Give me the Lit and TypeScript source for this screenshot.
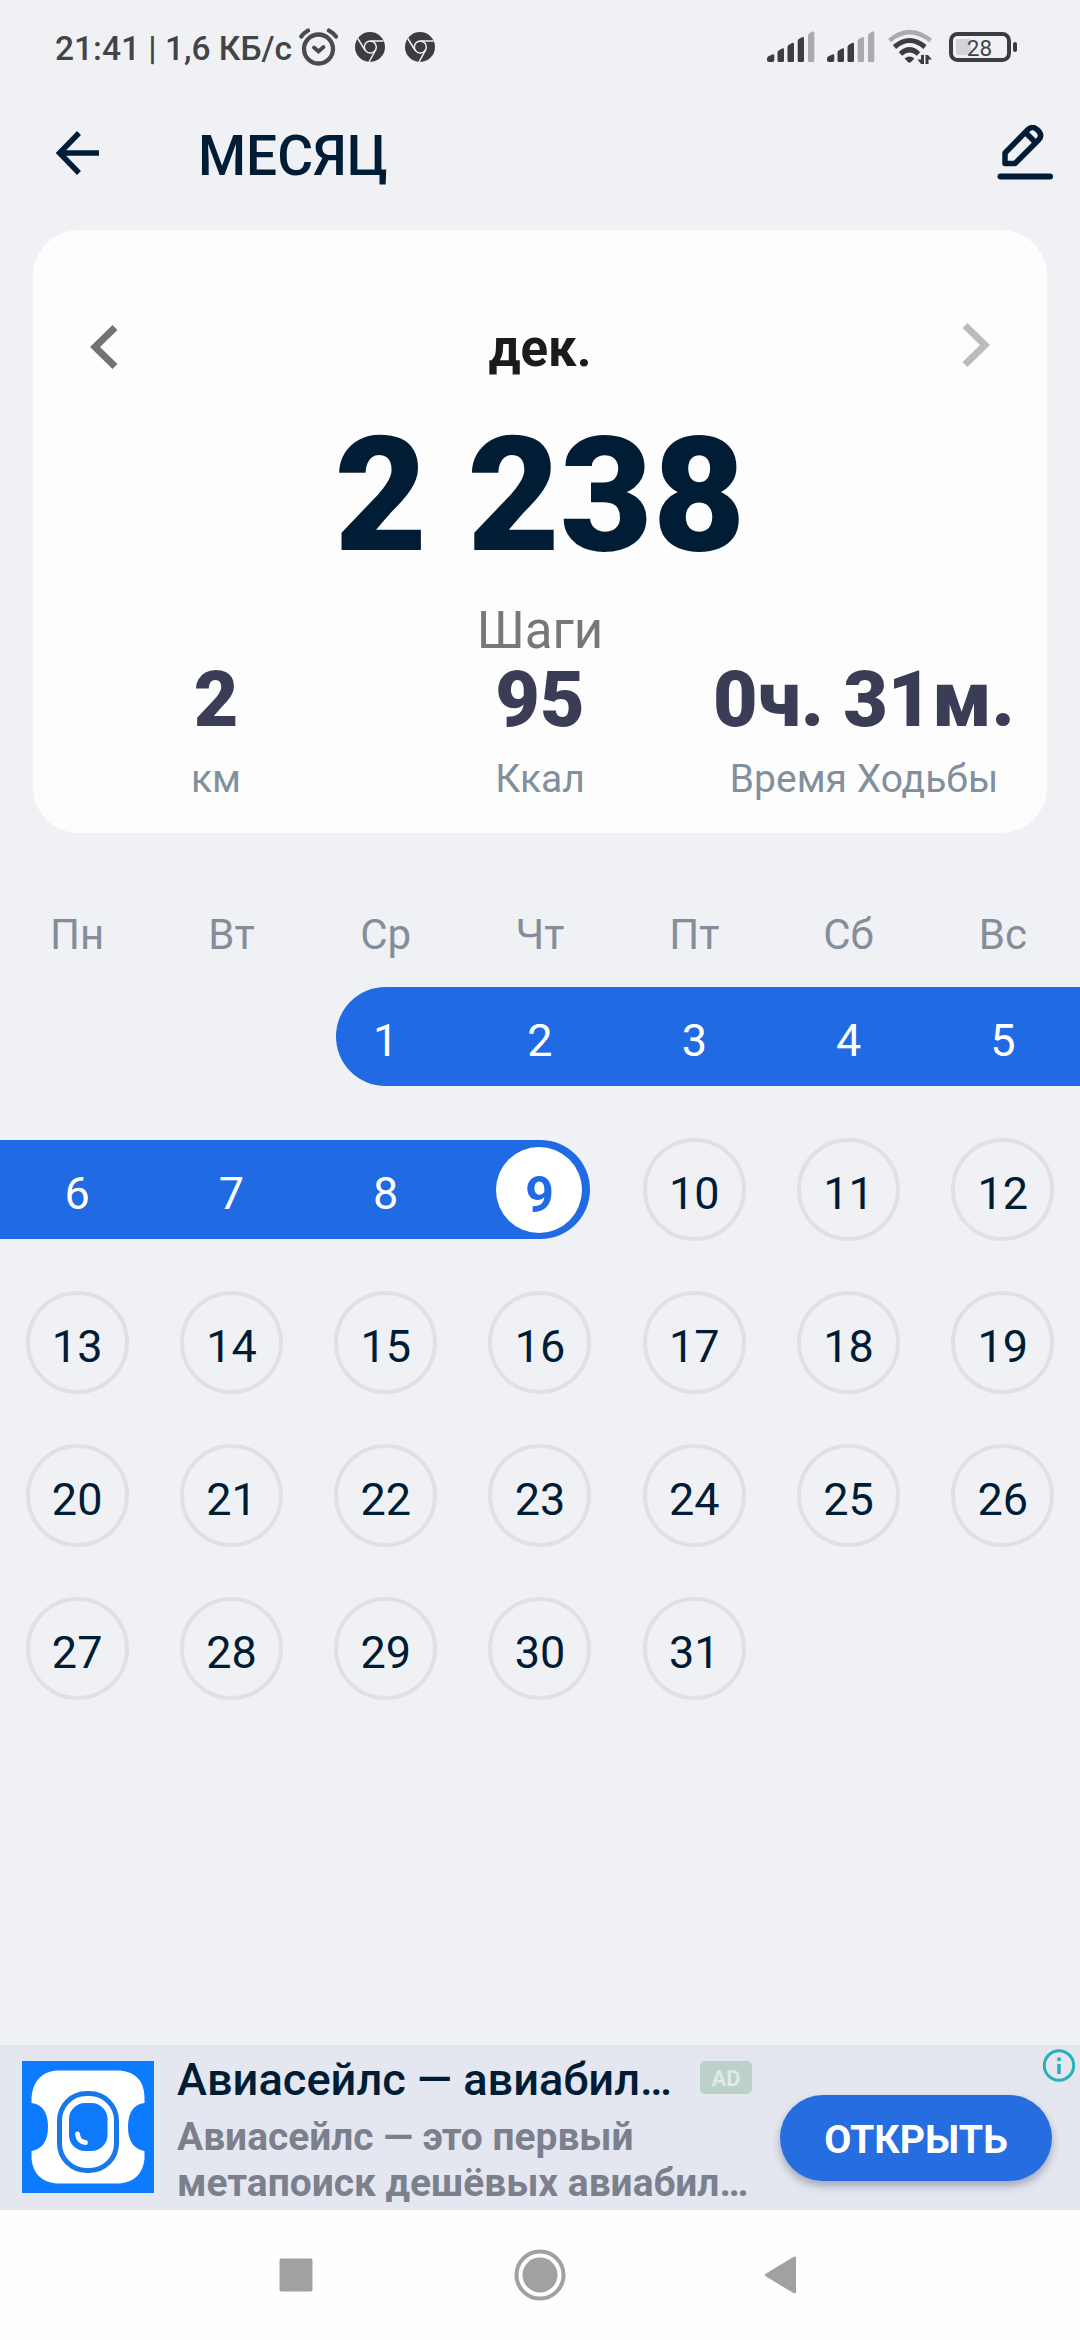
import { LitElement, html, css, svg } from "lit";
import { customElement } from "lit/decorators.js";
import { classMap } from "lit/directives/class-map.js";

const WEEKDAYS = ["Пн", "Вт", "Ср", "Чт", "Пт", "Сб", "Вс"];
const OFFSET = 2;
const DAYS = 31;
const TODAY = 9;
const STATS = [
  { value: "2", label: "км" },
  { value: "95", label: "Ккал" },
  { value: "0ч. 31м.", label: "Время Ходьбы" },
];

const signal = (level: number) => html`<svg class="signal" width="48" height="32" viewBox="0 0 48 32">
  ${[
    "M0 27.5Q0 26 1.500 25.200L5.500 23.400Q7.300 22.800 7.300 24.600V29Q7.300 31 5.300 31H2Q0 31 0 29Z",
    "M10.500 21.500Q10.500 20 12 19.200L15 17.500Q17 16.800 17 18.600V29.500Q17 31 15.500 31H12Q10.500 31 10.500 29.500Z",
    "M20.500 16Q20.500 14.500 22 13.700L25 12Q27 11.300 27 13V29.500Q27 31 25.500 31H22Q20.500 31 20.500 29.500Z",
    "M30.700 10Q30.700 8.500 32.200 7.700L35 6.200Q37 5.400 37 7.200V29.500Q37 31 35.500 31H32.200Q30.700 31 30.700 29.500Z",
    "M41 4.500Q41 3 42.500 2.200L45.300.6Q47.300 0 47.300 1.700V29.500Q47.300 31 45.800 31H42.500Q41 31 41 29.500Z",
  ].map((d, i) => svg`<path d=${d} fill=${i < level ? "#3c3d40" : "#a9abaf"} />`)}
</svg>`;

const chrome = () => html`<svg class="chrome" width="30" height="30" viewBox="0 0 30 30">
  <circle cx="15" cy="15" r="15" fill="#3c3d40" />
  <g fill="none" stroke="#f0f1f5" stroke-width="1.500">
    <circle cx="15.300" cy="15" r="6" />
    <path d="M15.300 9H28.500M9.900 18L2.800 6.500M20.600 18L14 30" />
  </g>
</svg>`;

@customElement("app-root")
export class AppRoot extends LitElement {
  static styles = css`
    :host { display: block; }
    * { box-sizing: border-box; }
    svg { display: block; flex: none; }
    .screen {
      width: 1080px; height: 2340px; display: flex; flex-direction: column;
      background: #f0f1f5; font-family: Roboto, "Noto Sans", sans-serif; color: #011c35; overflow: hidden;
    }
    .status { height: 94px; display: flex; align-items: center; padding: 0 63px 0 55px; color: #434447; flex: none; }
    .clock { font-size: 33.500px; line-height: 40px; font-weight: 500; white-space: nowrap; width: 243px; padding-top: 3px; }
    .chrome { margin-left: 17px; }
    .chrome + .chrome { margin-left: 20px; }
    .spacer { flex: 1; }
    .signal { margin-right: 12px; }
    .battery { position: relative; width: 68px; height: 30px; margin-left: 15px; }
    .level { position: absolute; left: 0; top: 0; width: 61px; text-align: center; font-size: 22.500px; line-height: 32px; }
    .bar { height: 136px; display: flex; align-items: center; padding: 0 26px 18px 56px; flex: none; }
    .title { margin: 5px 0 0 98px; font-size: 55px; line-height: 64px; font-weight: 500; flex: 1; }
    .card { margin: 0 33px; height: 603px; border-radius: 46px; background: #fdfdfd; flex: none; text-align: center; padding: 80px 21px 0; }
    .month { display: flex; justify-content: space-between; align-items: center; padding: 0 36px; height: 74px; }
    .name { font-size: 51px; font-weight: 700; color: #1b1b1c; line-height: 60px; padding-top: 4px; }
    .next { margin-bottom: 5px; }
    .prev { margin-bottom: 1px; }
    .steps { font-size: 160px; line-height: 190px; font-weight: 900; margin-top: 17px; }
    .unit { font-size: 51px; line-height: 60px; color: #777; margin-top: 10px; }
    .stats { display: grid; grid-template-columns: repeat(3, 324px); margin-top: -1px; }
    .value { font-size: 77px; line-height: 80px; font-weight: 900; color: #3a3d55; white-space: nowrap; }
    .label { font-size: 39px; line-height: 46px; color: #81909c; margin-top: 16px; }
    .weekdays { display: grid; grid-template-columns: repeat(7, 1fr); margin-top: 78px; text-align: center; font-size: 42px; line-height: 48px; color: #848e9b; }
    .calendar { display: grid; grid-template-columns: repeat(7, 1fr); grid-auto-rows: 153px; margin-top: 1px; text-align: center; }
    .day { display: flex; align-items: center; font-size: 45px; height: 153px; }
    .mark { flex: 1; height: 99px; display: flex; align-items: center; justify-content: center; padding-top: 8px; }
    .walked .mark { background: #206ae3; color: #fff; }
    .first .mark { border-radius: 50px 0 0 50px; margin-left: 27px; padding-right: 27px; }
    .last .mark { border-radius: 0 50px 50px 0; margin-right: 27px; padding: 0 0 0 26px; }
    .ring { width: 86px; height: 86px; border-radius: 50%; background: #fff; color: #206ae3; font-size: 50px; font-weight: 700; display: flex; align-items: center; justify-content: center; padding-top: 10px; }
    .future .mark { flex: none; width: 103px; height: 103px; margin: 0 auto; border: 4px solid #dfe1e5; border-radius: 50%; }
    .grow { flex: 1; }
    .ad { position: relative; height: 165px; background: #e4e7f0; display: flex; padding-left: 22px; flex: none; }
    .logo { margin-top: 16px; }
    .copy { width: 626px; padding: 9px 0 0 23px; flex: none; }
    .head { display: flex; align-items: flex-start; }
    .brand { font-size: 45.200px; line-height: 52px; font-weight: 500; white-space: nowrap; width: 523px; }
    .badge { margin-top: 7px; width: 52px; height: 33px; border-radius: 5px; background: #bcd1ca; color: #e0e9ea; font-size: 22px; font-weight: 700; line-height: 35px; text-align: center; }
    .text { font-size: 38.900px; line-height: 46px; font-weight: 700; color: #7c808d; white-space: nowrap; margin-top: 8px; }
    .open { margin-top: 50px; width: 272px; height: 86px; flex: none; border: 0; border-radius: 43px; background: #266ee0; color: #fff; font: 700 39.300px/46px Roboto, sans-serif; padding: 4px 0 0; box-shadow: 0 5px 8px rgba(40, 50, 80, .35); }
    .info { position: absolute; right: 0; top: 0; width: 39px; height: 40px; background: #e3e6ea; }
    .nav { height: 130px; background: #fefefe; flex: none; display: flex; align-items: center; padding: 0 283px 0 279px; justify-content: space-between; }
    .home { margin-left: 3px; }
  `;

  private day(n: number) {
    const cls = { day: true, walked: n <= TODAY, first: n === 1, last: n === TODAY, future: n > TODAY };
    return html`<div class=${classMap(cls)}>
      <div class="mark">${n === TODAY ? html`<span class="ring">${n}</span>` : n}</div>
    </div>`;
  }

  render() {
    return html`<div class="screen">
      <div class="status">
        <div class="clock">21:41 | 1,6 КБ/с</div>
        <svg width="40" height="38" viewBox="0 0 40 38" fill="none" stroke="#4a4b4e" stroke-linecap="round">
          <circle cx="20.500" cy="21" r="14.500" stroke-width="4.300" />
          <path d="M3.300 8.500Q6 4.800 10 2.500M38 8.500Q35 4.800 31 2.500" stroke-width="4.300" />
          <path d="M16 19.500L20.500 23.500L25.500 19" stroke-width="3.800" />
        </svg>
        ${chrome()}${chrome()}
        <div class="spacer"></div>
        ${signal(4)}${signal(3)}
        <svg width="47" height="34" viewBox="0 0 47 34" fill="none">
          <path d="M2.500 10.500Q22.500-6 43.500 10.500" stroke="#a9abaf" stroke-width="4.500" />
          <path d="M7.500 17Q22.500 4 38 17" stroke="#3c3d40" stroke-width="5" />
          <path d="M13.500 24Q22.500 15.500 31.500 24" stroke="#3c3d40" stroke-width="5" />
          <path d="M17.500 28.500Q22.500 24.500 27.500 28.500L24 32Q22.500 33.500 21 32Z" fill="#3c3d40" />
          <path d="M37 25V34H34L30.500 29.500H34V25ZM38.500 34V25H41L45 29.500H41.500V34Z" fill="#3c3d40" />
        </svg>
        <div class="battery">
          <svg width="69" height="30" viewBox="0 0 69 30">
            <rect x="2" y="2" width="58" height="26" rx="6.500" fill="none" stroke="#3c3d40" stroke-width="4" />
            <rect x="7" y="7" width="15" height="16" rx="2" fill="#d3d4d7" />
            <rect x="64" y="10" width="4" height="10" rx="2" fill="#3c3d40" />
          </svg>
          <div class="level">28</div>
        </div>
      </div>
      <div class="bar">
        <svg width="44" height="44" viewBox="0 0 44 44" fill="none" stroke="#011c35" stroke-width="5.500">
          <path d="M23 2L3.500 22L23 42M3 22H43" />
        </svg>
        <div class="title">МЕСЯЦ</div>
        <svg width="57" height="56" viewBox="0 0 57 56" fill="none" stroke="#011c35" stroke-width="5.500" stroke-linejoin="round">
          <path d="M8 38.500V28L31 4.500Q35.500.5 40 4.500L42 6.500Q45.500 11 41.500 15L18 38.500ZM29 8L39 18" />
          <path d="M3.500 51.500H53" stroke-width="6" stroke-linecap="round" />
        </svg>
      </div>
      <div class="card">
        <div class="month">
          <svg class="prev" width="28" height="44" viewBox="0 0 28 44" fill="none" stroke="#707375" stroke-width="7"><path d="M25 2.500L5 22L25 41.500" /></svg>
          <span class="name">дек.</span>
          <svg class="next" width="28" height="44" viewBox="0 0 28 44" fill="none" stroke="#b9bbbc" stroke-width="7"><path d="M3 2.500L23 22L3 41.500" /></svg>
        </div>
        <div class="steps">2 238</div>
        <div class="unit">Шаги</div>
        <div class="stats">
          ${STATS.map((s) => html`<div><div class="value">${s.value}</div><div class="label">${s.label}</div></div>`)}
        </div>
      </div>
      <div class="weekdays">${WEEKDAYS.map((d) => html`<div>${d}</div>`)}</div>
      <div class="calendar">
        ${Array.from({ length: OFFSET }, () => html`<div></div>`)}
        ${Array.from({ length: DAYS }, (_, i) => this.day(i + 1))}
      </div>
      <div class="grow"></div>
      <div class="ad">
        <svg class="logo" width="132" height="132" viewBox="0 0 132 132">
          <rect width="132" height="132" fill="#0c7bff" />
          <path fill="#fff" d="M34 9.500H98Q122 12 122.500 36V42Q106 44 106 66Q106 87 122.500 90V98Q120 120 98 122.500H34Q12 120 9.500 98V90Q26 87 26 66Q26 44 9.500 42V36Q12 12 34 9.500Z" />
          <rect x="37.500" y="32.500" width="57" height="77" rx="27" fill="#fff" stroke="#1a77ea" stroke-width="5" />
          <rect x="47" y="42" width="38.500" height="48" rx="16" fill="#0f79fb" />
          <path d="M55.500 73Q56.500 81 63.500 81.500" fill="none" stroke="#fff" stroke-width="4.800" stroke-linecap="round" />
        </svg>
        <div class="copy">
          <div class="head"><div class="brand">Авиасейлс — авиабил…</div><div class="badge">AD</div></div>
          <div class="text">Авиасейлс — это первый<br />метапоиск дешёвых авиабил…</div>
        </div>
        <button class="open">ОТКРЫТЬ</button>
        <svg class="info" viewBox="0 0 39 40">
          <circle cx="18" cy="20.500" r="14.700" fill="none" stroke="#27aebf" stroke-width="3" />
          <path d="M18 19V29M18 12.500V16" stroke="#27aebf" stroke-width="3.500" />
        </svg>
      </div>
      <div class="nav">
        <svg width="34" height="34" viewBox="0 0 34 34"><rect x=".5" y=".5" width="33" height="33" rx="2" fill="#a1a1a1" /></svg>
        <svg class="home" width="52" height="52" viewBox="0 0 52 52"><circle cx="26" cy="26" r="23.500" fill="none" stroke="#a1a1a1" stroke-width="4" /><circle cx="26" cy="26" r="17.500" fill="#a1a1a1" /></svg>
        <svg width="33" height="40" viewBox="0 0 33 40"><path d="M2.500 20L30.500 3V37Z" fill="#a1a1a1" stroke="#a1a1a1" stroke-width="3" stroke-linejoin="round" /></svg>
      </div>
    </div>`;
  }
}
